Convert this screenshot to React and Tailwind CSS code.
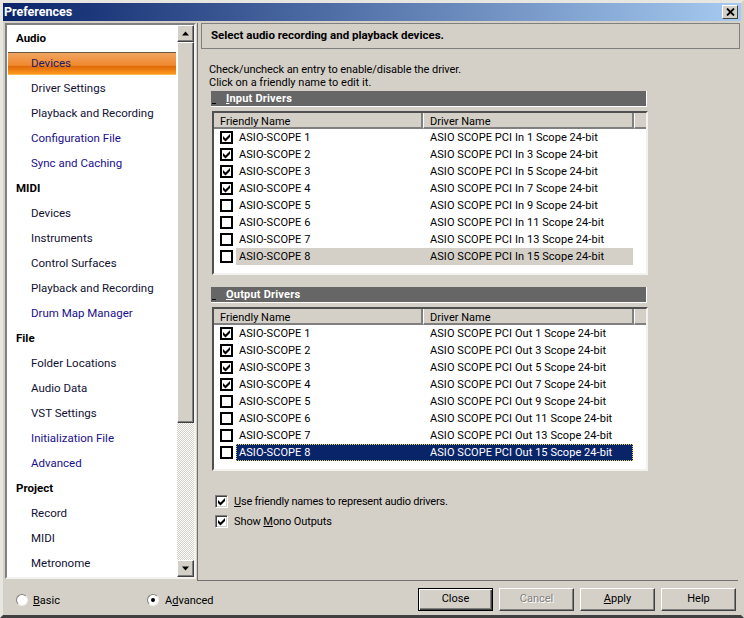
import React from "react";

const navGroups = [
  { title: "Audio", items: [["Devices", "active"], ["Driver Settings"], ["Playback and Recording"], ["Configuration File", "blue"], ["Sync and Caching", "blue"]] },
  { title: "MIDI", items: [["Devices"], ["Instruments"], ["Control Surfaces"], ["Playback and Recording"], ["Drum Map Manager", "blue"]] },
  { title: "File", items: [["Folder Locations"], ["Audio Data"], ["VST Settings"], ["Initialization File", "blue"], ["Advanced", "blue"]] },
  { title: "Project", items: [["Record"], ["MIDI"], ["Metronome"]] },
];

const inputRows = [1, 3, 5, 7, 9, 11, 13, 15];

const checkPath = "M1 3 L3.5 5.5 L8 1 V4 L3.5 8.5 L1 6 Z";

function Check({ checked }) {
  return (
    <span className="w-[13px] h-[13px] border-2 border-black bg-white flex items-center justify-center shrink-0">
      {checked && (
        <svg width="9" height="9" viewBox="0 0 9 9">
          <path d={checkPath} fill="#000" />
        </svg>
      )}
    </span>
  );
}

function SunkenCheck() {
  return (
    <span className="w-[13px] h-[13px] border border-t-[#808080] border-l-[#808080] border-r-white border-b-white bg-white flex items-center justify-center shrink-0 shadow-[inset_1px_1px_0_#404040,inset_-1px_-1px_0_#d4d0c8]">
      <svg width="9" height="9" viewBox="0 0 9 9">
        <path d={checkPath} fill="#000" />
      </svg>
    </span>
  );
}

function Radio({ checked }) {
  return (
    <span className="w-3 h-3 rounded-full bg-white border border-t-[#808080] border-l-[#808080] border-r-[#eeeeee] border-b-[#eeeeee] flex items-center justify-center shrink-0">
      {checked && <span className="w-1 h-1 rounded-full bg-black" />}
    </span>
  );
}

function DriverTable({ kind, selected }) {
  return (
    <div className="w-[436px] h-[164px] ml-[3px] border-2 border-t-[#505050] border-l-[#505050] border-r-[#f4f2ee] border-b-[#f4f2ee] bg-white">
      <div className="flex h-4 bg-[#d4d0c8] text-black">
        <div className="w-[209px] pl-1.5 border-r-2 border-r-[#808080] border-b-2 border-b-[#808080] leading-[17px]">Friendly Name</div>
        <div className="w-[211px] pl-1.5 border-l border-l-white border-r-2 border-r-[#808080] border-b-2 border-b-[#808080] leading-[17px]">Driver Name</div>
        <div className="flex-1 border-l border-l-white border-b-2 border-b-[#808080]" />
      </div>
      <div className="tracking-[0.06px]">
        {inputRows.map((n, i) => {
          const last = i === 7;
          const rowBg = last
            ? selected
              ? "bg-[#0a246a] text-white outline-1 outline-dotted outline-[#e8d060] -outline-offset-1"
              : "bg-[#d4d0c8]"
            : "";
          return (
            <div key={n} className="flex items-center h-[17px] pl-1.5">
              <Check checked={i < 4} />
              <div className={`flex items-center h-[17px] ml-[3px] w-[397px] ${rowBg}`}>
                <span className="w-[194px] pl-[3px]">ASIO-SCOPE {i + 1}</span>
                <span className="whitespace-nowrap">ASIO SCOPE PCI {kind} {n} Scope 24-bit</span>
              </div>
            </div>
          );
        })}
      </div>
    </div>
  );
}

function SectionBar({ letter, rest }) {
  return (
    <div className="relative w-[436px] ml-0.5 h-4 bg-[#666666] border-r border-b border-r-white border-b-white text-white font-bold pl-[15px] leading-[15px] tracking-[0.2px]">
      <span className="absolute left-px bottom-0.5 w-1 h-px bg-black" />
      <span className="underline">{letter}</span>
      {rest}
    </div>
  );
}

function Button({ children, disabled, primary }) {
  return (
    <button
      className={`w-[75px] h-[23px] bg-[#d4d0c8] flex items-center justify-center ${
        primary
          ? "border border-black shadow-[inset_1px_1px_0_#fff,inset_-1px_-1px_0_#404040,inset_-2px_-2px_0_#808080]"
          : "border border-t-white border-l-white border-r-[#404040] border-b-[#404040] shadow-[inset_-1px_-1px_0_#808080]"
      } ${disabled ? "text-[#808080] [text-shadow:1px_1px_0_#fff]" : "text-black"}`}
    >
      {children}
    </button>
  );
}

function ScrollButton({ down }) {
  return (
    <div className="h-[17px] bg-[#d4d0c8] border border-t-white border-l-white border-r-[#404040] border-b-[#404040] shadow-[inset_-1px_-1px_0_#808080] flex items-center justify-center">
      <svg width="9" height="5" viewBox="0 0 9 5">
        <path d={down ? "M1 0.5 H8 L4.5 4.5 Z" : "M4.5 0.5 L8 4.5 H1 Z"} fill="#000" />
      </svg>
    </div>
  );
}

export default function App() {
  return (
    <div
      className="w-[744px] h-[618px] bg-[#d4d0c8] text-black text-[11px] border-t-[3px] border-t-[#e8e6e0] border-l-[3px] border-l-[#e8e6e0] border-r-[3px] border-r-[#d4d0c8] border-b-[3px] border-b-[#404040] flex flex-col overflow-hidden"
      style={{ fontFamily: 'Roboto, "Liberation Sans", Arial, sans-serif' }}
    >
      {/* Title bar */}
      <div className="h-[18px] shrink-0 flex items-center justify-between pl-px pr-[3px] bg-[linear-gradient(90deg,#0a246a,#a6caf0)]">
        <span className="text-white font-bold text-[12.5px] leading-none">Preferences</span>
        <span className="w-4 h-3.5 bg-[#d4d0c8] border border-t-white border-l-white border-r-[#404040] border-b-[#404040] flex items-center justify-center">
          <svg width="9" height="8" viewBox="0 0 9 8">
            <path d="M1 0.5 L8 7.5 M8 0.5 L1 7.5" stroke="#000" strokeWidth="1.8" />
          </svg>
        </span>
      </div>

      <div className="flex h-[560px] shrink-0 pt-0.5">
        {/* Sidebar */}
        <div className="w-[191px] h-[556px] ml-0.5 shrink-0 flex border-2 border-t-[#808080] border-l-[#808080] border-r-[#f4f2ee] border-b-[#f4f2ee] shadow-[inset_1px_1px_0_#404040]">
          <div className="w-[170px] bg-white overflow-hidden pt-px text-[11.5px]">
            {navGroups.map((group) => (
              <div key={group.title + group.items.length}>
                <div className="h-[25px] pl-[9px] flex items-center font-bold">{group.title}</div>
                {group.items.map(([label, mode]) =>
                  mode === "active" ? (
                    <div
                      key={label}
                      className="h-[23px] my-px mx-px pl-[23px] flex items-center border-t border-t-[#6a5a40] bg-[linear-gradient(180deg,#f0a460_0%,#f08a30_55%,#e06a08_62%,#ff9820_95%,#f8d070_100%)] text-[#1a1a66]"
                    >
                      {label}
                    </div>
                  ) : (
                    <div
                      key={label}
                      className={`h-[25px] flex items-center pl-6 ${mode === "blue" ? "text-[#1a0f8c]" : "text-[#111133]"}`}
                    >
                      {label}
                    </div>
                  )
                )}
              </div>
            ))}
          </div>
          <div className="w-[17px] flex flex-col">
            <ScrollButton />
            <div className="h-[381px] bg-[#d4d0c8] border border-t-white border-l-white border-r-[#404040] border-b-[#404040] shadow-[inset_-1px_-1px_0_#808080]" />
            <div className="flex-1 bg-[repeating-conic-gradient(#d4d0c8_0_25%,#ffffff_0_50%)] bg-[length:2px_2px]" />
            <ScrollButton down />
          </div>
        </div>

        {/* Main panel */}
        <div className="ml-px w-[541px] h-[558px] border-l border-b border-l-[#707070] border-b-[#707070] pl-[3px]">
          <div className="w-[539px] h-[26px] border border-[#808080] flex items-center pl-[9px] font-bold text-[11.5px]">
            Select audio recording and playback devices.
          </div>
          <div className="ml-2 mt-3.5 leading-[13px]">
            <p className="tracking-[-0.08px]">Check/uncheck an entry to enable/disable the driver.</p>
            <p>Click on a friendly name to edit it.</p>
            <div className="mt-0.5">
              <SectionBar letter="I" rest="nput Drivers" />
            </div>
            <div className="mt-1">
              <DriverTable kind="In" />
            </div>
            <div className="mt-3">
              <SectionBar letter="O" rest="utput Drivers" />
            </div>
            <div className="mt-1">
              <DriverTable kind="Out" selected />
            </div>
            <label className="flex items-center gap-1.5 mt-6 ml-1.5 tracking-[-0.22px]">
              <SunkenCheck />
              <span>
                <u>U</u>se friendly names to represent audio drivers.
              </span>
            </label>
            <label className="flex items-center gap-1.5 mt-[7px] ml-1.5 tracking-[-0.1px]">
              <SunkenCheck />
              <span>
                Show <u>M</u>ono Outputs
              </span>
            </label>
          </div>
        </div>
      </div>

      {/* Footer */}
      <div className="flex-1 flex items-center pl-[13px] pr-[5px] pt-[3px]">
        <label className="flex items-center gap-[5px] w-[131px] mt-px">
          <Radio />
          <span className="pt-0.5"><u>B</u>asic</span>
        </label>
        <label className="flex items-center gap-1.5 mt-px">
          <Radio checked />
          <span className="pt-0.5">A<u>d</u>vanced</span>
        </label>
        <div className="ml-auto flex gap-1.5">
          <Button primary>Close</Button>
          <Button disabled>Cancel</Button>
          <Button><u>A</u>pply</Button>
          <Button>Help</Button>
        </div>
      </div>
    </div>
  );
}
